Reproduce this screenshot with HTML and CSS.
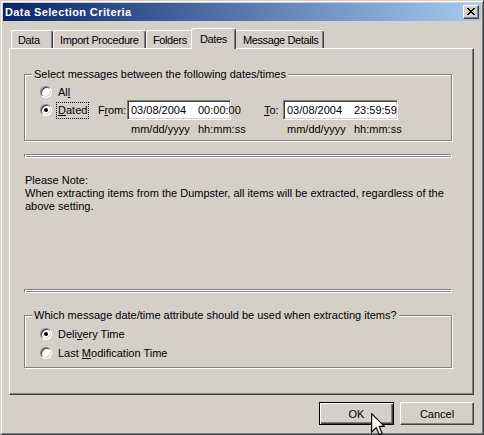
FILE: index.html
```html
<!DOCTYPE html>
<html>
<head>
<meta charset="utf-8">
<title>Data Selection Criteria</title>
<link rel="stylesheet" href="styles.css">
</head>
<body>
<div class="window">
  <div class="titlebar">
    <span class="title">Data Selection Criteria</span>
    <span class="close"><svg width="8" height="7" viewBox="0 0 8 7" shape-rendering="crispEdges"><path d="M0 0h2v1H0z M6 0h2v1H6z M1 1h2v1H1z M5 1h2v1H5z M2 2h4v1H2z M3 3h2v1H3z M2 4h4v1H2z M1 5h2v1H1z M5 5h2v1H5z M0 6h2v1H0z M6 6h2v1H6z" fill="#000"/></svg></span>
  </div>
  <div class="tabs">
    <div class="tab t-data">Data</div>
    <div class="tab t-import">Import Procedure</div>
    <div class="tab t-folders">Folders</div>
    <div class="tab t-dates">Dates</div>
    <div class="tab t-details">Message Details</div>
  </div>
  <div class="panel">
    <fieldset class="group g1">
      <legend>Select messages between the following dates/times</legend>
      <div class="gbody gbody1">
        <div class="row"><span class="radio"></span><span>Al<u>l</u></span></div>
        <div class="dgrid">
          <div class="dated"><span class="radio on"></span><span class="focus"><u>D</u>ated</span></div>
          <span class="flabel">F<u>r</u>om:</span>
          <div class="edit e1"><span class="d">03/08/2004</span><span>00:00:00</span></div>
          <span class="tlabel"><u>T</u>o:</span>
          <div class="edit e2"><span class="d">03/08/2004</span><span>23:59:59</span></div>
          <div class="hint h1"><span class="d">mm/dd/yyyy</span><span>hh:mm:ss</span></div>
          <div class="hint h2"><span class="d">mm/dd/yyyy</span><span>hh:mm:ss</span></div>
        </div>
      </div>
    </fieldset>
    <div class="sep sep1"></div>
    <p class="note">Please Note:<br>When extracting items from the Dumpster, all items will be extracted, regardless of the<br>above setting.</p>
    <div class="sep sep2"></div>
    <fieldset class="group g2">
      <legend>Which message date/time attribute should be used when extracting items?</legend>
      <div class="gbody gbody2">
        <div class="row"><span class="radio on"></span><span>Deli<u>v</u>ery Time</span></div>
        <div class="row row2"><span class="radio"></span><span>Last <u>M</u>odification Time</span></div>
      </div>
    </fieldset>
  </div>
  <div class="buttons">
    <button class="btn btn-ok">OK</button>
    <button class="btn btn-cancel">Cancel</button>
  </div>
  <svg class="cursor" width="14" height="22" viewBox="0 0 12 19"><polygon points="0.5,0.5 0.5,16.5 4.5,12.5 7,18.5 9.5,17.5 7,11.5 11.5,11.5" fill="#fff" stroke="#000" stroke-width="1" stroke-linejoin="miter"/></svg>
</div>
</body>
</html>
```

FILE: styles.css
```css
* { box-sizing: border-box; }
html, body { margin: 0; padding: 0; }
body {
  width: 484px;
  height: 435px;
  overflow: hidden;
  background: #D4D0C8;
  font-family: "Liberation Sans", Arial, sans-serif;
  font-size: 11px;
  color: #000;
}
.window {
  position: relative;
  width: 484px;
  height: 435px;
  background: #D4D0C8;
  border: 1px solid;
  border-color: #D4D0C8 #404040 #404040 #D4D0C8;
  box-shadow: inset 1px 1px 0 #fff, inset -1px -1px 0 #808080;
  padding: 2px;
  display: flex;
  flex-direction: column;
}
.titlebar {
  height: 18px;
  flex: none;
  display: flex;
  align-items: center;
  justify-content: space-between;
  background: linear-gradient(to right, #0A246A, #A6CAF0);
  padding: 0 2px;
}
.title {
  color: #fff;
  font-weight: bold;
  letter-spacing: 0.4px;
  line-height: 18px;
  white-space: nowrap;
}
.close {
  width: 16px;
  height: 14px;
  background: #D4D0C8;
  border: 1px solid;
  border-color: #fff #404040 #404040 #fff;
  box-shadow: inset -1px -1px 0 #808080;
}
.close svg { display: block; margin: 2px 0 0 3px; }

.tabs {
  display: flex;
  align-items: flex-end;
  height: 20px;
  flex: none;
  margin: 7px 0 0 8px;
}
.tab {
  height: 18px;
  flex: none;
  padding: 2px 0 0 6px;
  line-height: 14px;
  letter-spacing: -0.4px;
  white-space: nowrap;
  background: #D4D0C8;
  border-top: 1px solid #fff;
  border-left: 1px solid #fff;
  border-right: 1px solid #404040;
  box-shadow: inset -1px 0 0 #808080;
  border-radius: 3px 3px 0 0;
}
.t-data { width: 42px; }
.t-import { width: 93px; }
.t-folders { width: 47px; }
.t-dates {
  width: 45px;
  height: 21px;
  margin: 0 -2px -1px;
  padding: 3px 0 0 8px;
  position: relative;
  z-index: 1;
}
.t-details { width: 90px; padding-left: 8px; }

.panel {
  flex: none;
  height: 347px;
  margin: 0 7px 0 6px;
  border: 1px solid;
  border-color: #fff #404040 #404040 #fff;
  box-shadow: inset -1px -1px 0 #808080;
  padding: 19px 0 0 14px;
}
.group {
  margin: 0;
  padding: 0;
  min-width: 0;
  width: 428px;
  border: 1px solid #808080;
  box-shadow: 1px 1px 0 #fff, inset 1px 1px 0 #fff;
}
.group legend {
  margin-left: 7px;
  padding: 0 2px;
  line-height: 13px;
  background: #D4D0C8;
  white-space: nowrap;
}
.gbody1 { padding: 4px 0 4px 15px; }
.gbody2 { padding: 5px 0 8px 15px; }
.row {
  display: flex;
  align-items: center;
  height: 13px;
  white-space: nowrap;
}
.row2 { margin-top: 6px; }
.radio {
  position: relative;
  flex: none;
  width: 12px;
  height: 12px;
  margin-right: 6px;
  border-radius: 50%;
  background: #fff;
  border: 1px solid;
  border-color: #808080 #fff #fff #808080;
  box-shadow: inset 1px 1px 0 #404040, inset -1px -1px 0 #D4D0C8;
}
.radio.on::after {
  content: "";
  position: absolute;
  left: 3px;
  top: 3px;
  width: 4px;
  height: 4px;
  border-radius: 50%;
  background: #000;
}
.dgrid {
  display: grid;
  grid-template-columns: 58px 29px 104px 33px 19px 115px;
  grid-template-rows: 20px 13px;
  row-gap: 3px;
  margin-top: 2px;
  align-items: center;
  white-space: nowrap;
}
.dated { grid-column: 1; grid-row: 1; display: flex; align-items: center; }
.focus { outline: 1px dotted #000; outline-offset: 1px; line-height: 13px; }
.flabel { grid-column: 2; grid-row: 1; letter-spacing: -0.2px; }
.e1 { grid-column: 3; grid-row: 1; }
.tlabel { grid-column: 5; grid-row: 1; }
.e2 { grid-column: 6; grid-row: 1; }
.edit {
  height: 20px;
  display: flex;
  padding-left: 3px;
  line-height: 18px;
  background: #fff;
  border: 1px solid;
  border-color: #808080 #fff #fff #808080;
  box-shadow: inset 1px 1px 0 #404040, inset -1px -1px 0 #D4D0C8;
}
.d { display: inline-block; width: 67px; flex: none; }
.hint {
  grid-row: 2;
  display: flex;
  padding-left: 4px;
  line-height: 13px;
}
.h1 { grid-column: 3; }
.h2 { grid-column: 6; }

.sep {
  width: 428px;
  height: 4px;
  border: 1px solid;
  border-color: #808080 #fff #fff #808080;
  box-shadow: inset 1px 1px 0 #fff, inset -1px -1px 0 #808080;
}
.sep1 { margin-top: 13px; }
.note {
  margin: 16px 0 0 1px;
  line-height: 13px;
  white-space: nowrap;
}
.sep2 { margin-top: 76px; }
.g2 { margin-top: 16px; }

.buttons {
  display: flex;
  justify-content: flex-end;
  gap: 6px;
  margin: 7px 7px 0 0;
}
.btn {
  width: 75px;
  height: 23px;
  padding: 0;
  font: inherit;
  color: #000;
  background: #D4D0C8;
  border: 1px solid;
  border-color: #fff #404040 #404040 #fff;
  box-shadow: inset -1px -1px 0 #808080;
}
.btn-cancel { width: 74px; }
.btn-ok {
  border-color: #000;
  box-shadow: inset 1px 1px 0 #fff, inset -1px -1px 0 #404040, inset -2px -2px 0 #808080;
}
.cursor {
  position: absolute;
  left: 370px;
  top: 412px;
}
```
